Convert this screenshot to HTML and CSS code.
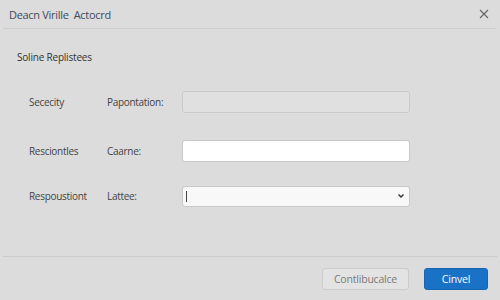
FILE: index.html
```html
<!DOCTYPE html>
<html lang="en">
<head>
  <meta charset="UTF-8" />
  <title>Deacn Virille Actocrd</title>
  <link rel="stylesheet" href="styles.css">
</head>
<body>
  <div class="dialog">
    <div class="titlebar">
      <span class="title">Deacn Virille&nbsp; Actocrd</span>
      <svg class="close" width="10" height="10" viewBox="0 0 10 10"><path d="M1 1 L9 9 M9 1 L1 9" stroke="#666" stroke-width="1.1" fill="none"/></svg>
    </div>

    <div class="content">
      <h2>Soline Replistees</h2>

      <div class="row">
        <span class="group">Sececity</span>
        <label for="f1">Papontation:</label>
        <input type="text" id="f1" class="field disabled" disabled />
      </div>
      <div class="row">
        <span class="group">Resciontles</span>
        <label for="f2">Caarne:</label>
        <input type="text" id="f2" class="field" />
      </div>
      <div class="row">
        <span class="group">Respoustiont</span>
        <label for="f3">Lattee:</label>
        <div class="field select" id="f3">
          <span class="caret-line"></span>
          <svg class="chev" width="8" height="6" viewBox="0 0 8 6"><path d="M1.5 1.5 L4 4 L6.5 1.5" fill="none" stroke="#333" stroke-width="1.4"/></svg>
        </div>
      </div>
    </div>

    <div class="footer">
      <button class="btn secondary">Contlibucalce</button>
      <button class="btn primary">Cinvel</button>
    </div>
  </div>
</body>
</html>
```

FILE: styles.css
```css
body {
  margin: 0;
  background: #dcdcdc;
  font-family: 'Open Sans', 'Noto Sans', sans-serif;
  color: #3a3a3a;
}
.dialog {
  width: 500px;
  height: 300px;
  display: flex;
  flex-direction: column;
}
.titlebar {
  height: 28px;
  margin: 0 4px 0 3px;
  padding: 0 6px;
  display: flex;
  align-items: center;
  justify-content: space-between;
  border-bottom: 1px solid #cdcdcd;
}
.title {
  font-size: 11px;
  letter-spacing: -0.3px;
  color: #3e4b5c;
}
.close {
  margin-right: 1px;
}
.content {
  flex: 1;
  padding: 0 17px;
}
h2 {
  font-size: 10px;
  letter-spacing: -0.2px;
  font-weight: normal;
  color: #333;
  margin: 21px 0 27px;
}
.row {
  display: grid;
  grid-template-columns: 78px 75px 228px;
  align-items: center;
  padding-left: 12px;
  height: 22px;
  margin-bottom: 27px;
  font-size: 10px;
  letter-spacing: -0.3px;
  color: #444;
}
.row:nth-child(3) { margin-bottom: 23px; }
.row:last-child { margin-bottom: 0; }
.field {
  box-sizing: border-box;
  height: 22px;
  width: 228px;
  border: 1px solid #c9c9c9;
  border-radius: 3px;
  background: #fff;
  margin: 0;
  padding: 0 4px;
  font: inherit;
}
.field.disabled {
  background: #e0e0e0;
  border-color: #cacaca;
}
.select {
  background: #f8f8f8;
  height: 21px;
  display: flex;
  align-items: center;
  justify-content: space-between;
  padding: 0 4px 0 3px;
}
.caret-line {
  width: 1px;
  height: 11px;
  background: #444;
}
.footer {
  height: 43px;
  margin: 0 3px;
  border-top: 1px solid #cbcbcb;
  display: flex;
  justify-content: flex-end;
  align-items: center;
  gap: 15px;
  padding-right: 9px;
}
.btn {
  height: 22px;
  border-radius: 3px;
  font-family: inherit;
  font-size: 10.5px;
  letter-spacing: -0.2px;
  cursor: pointer;
}
.secondary {
  width: 87px;
  background: #e3e3e3;
  border: 1px solid #cbcbcb;
  color: #7a7a7a;
}
.primary {
  width: 64px;
  background: #1a72c7;
  border: 1px solid #1666b5;
  color: #fff;
}
```
